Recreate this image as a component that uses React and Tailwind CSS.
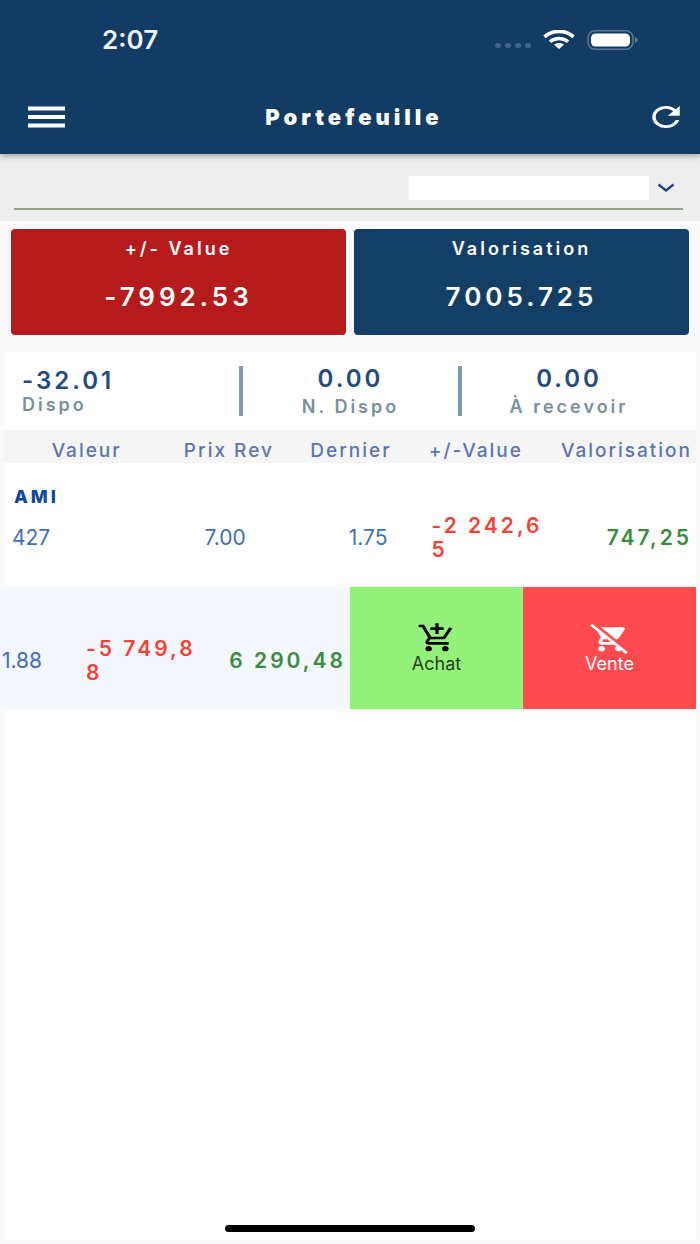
import { MdAddShoppingCart, MdRemoveShoppingCart } from "react-icons/md";
import { IoMdRefresh } from "react-icons/io";

function StatusBar() {
  return (
    <div className="flex h-20 items-center justify-between pl-[102px] pr-[61px]">
      <span className="text-[26px] leading-6 font-semibold text-white/95">2:07</span>
      <div className="flex items-center">
        <svg width="36" height="6" viewBox="0 0 36 6" className="mt-3 mr-3" aria-hidden="true">
          {[0, 10, 20, 30].map((x) => (
            <rect key={x} x={x} y="0" width="6" height="5" rx="2.5" fill="#41648a" />
          ))}
        </svg>
        <svg width="32" height="20" viewBox="0 0 32 20" className="mr-3" fill="none" stroke="#fff" aria-hidden="true">
          <path d="M1.5 6.8C9.5 -0.4 22.5 -0.4 30.5 6.8" strokeWidth="3.6" />
          <path d="M7 11.8C12 7.4 20 7.4 25 11.8" strokeWidth="3.4" />
          <path d="M16 19l-5-4.300c2.500-2.300 7.500-2.300 10 0z" fill="#fff" stroke="none" />
        </svg>
        <svg width="52" height="20" viewBox="0 0 52 20" aria-hidden="true">
          <rect x="1" y="0.75" width="45" height="18.5" rx="7" fill="none" stroke="#5b7996" strokeWidth="1.5" />
          <rect x="4" y="3.500" width="39" height="13" rx="4.500" fill="#fff" />
          <path d="M48 7c3.500 1 3.500 5 0 6z" fill="#5b7996" />
        </svg>
      </div>
    </div>
  );
}

function NavBar() {
  return (
    <div className="grid h-[74px] grid-cols-[1fr_auto_1fr] items-center pr-5 pl-7">
      <button type="button" aria-label="Menu" className="w-[38px]">
        <svg width="38" height="22" viewBox="0 0 38 22" fill="#fff">
          <rect y="0.500" width="37" height="4" />
          <rect y="9" width="37" height="4" />
          <rect y="17.500" width="37" height="4" />
        </svg>
      </button>
      <h1 className="text-[22px] leading-6 font-black tracking-[4px] text-white">Portefeuille</h1>
      <button type="button" aria-label="Actualiser" className="justify-self-end text-white">
        <IoMdRefresh preserveAspectRatio="none" className="-mr-1.5 h-8 w-10" />
      </button>
    </div>
  );
}

function AccountPicker() {
  return (
    <div className="bg-[#eeeeee] pt-[22px] pr-[17px] pb-[11px] pl-3.5">
      <div className="flex items-center justify-end border-b-2 border-[#94a48a] pr-1.5 pb-2">
        <select aria-label="Compte" className="h-6 w-[240px] appearance-none bg-white" />
        <svg width="18" height="10" viewBox="0 0 18 10" className="mr-0.5 ml-2" fill="none" stroke="#1d4580" strokeWidth="2.400" aria-hidden="true">
          <path d="M1.500 1.500L9 7.500L16.500 1.500" />
        </svg>
      </div>
    </div>
  );
}

function SummaryCard({ label, value, color }) {
  return (
    <div className={`flex h-[106px] flex-1 flex-col items-center gap-5 rounded-[4px] pt-2 text-white ${color}`}>
      <span className="text-[18px] leading-6 font-semibold tracking-[3px]">{label}</span>
      <span className="text-[26px] leading-8 font-semibold tracking-[4px]">{value}</span>
    </div>
  );
}

function Stat({ label, value, align }) {
  return (
    <div className={`flex flex-col font-semibold ${align}`}>
      <span className="text-[24px] leading-6 tracking-[3px] text-[#254a80]">{value}</span>
      <span className="text-[18px] leading-6 tracking-[3px] text-[#78909c]">{label}</span>
    </div>
  );
}

const amount = "text-[21px] leading-6 font-semibold tracking-[3px]";
const plain = "text-[21px] leading-6 text-[#3f6fba]";

export default function App() {
  return (
    <div className="flex min-h-screen flex-col bg-[#fafafa] font-['Inter',sans-serif]">
      <header className="relative bg-[#123c64] shadow-[0_2px_6px_rgba(0,0,0,0.35)]">
        <StatusBar />
        <NavBar />
      </header>
      <AccountPicker />

      <section className="flex gap-2 px-[11px] pt-2 pb-[17px]">
        <SummaryCard label="+/- Value" value="-7992.53" color="bg-[#b51b1b]" />
        <SummaryCard label="Valorisation" value="7005.725" color="bg-[#133f66]" />
      </section>

      <main className="mx-1 mb-1 flex flex-1 flex-col bg-white">
        <section className="grid h-[78px] grid-cols-[34%_4px_31%_4px_31%] items-center">
          <Stat value="-32.01" label="Dispo" align="items-start pt-1 pl-[18px]" />
          <div className="h-[50px] bg-[#8199b5]" />
          <Stat value="0.00" label="N. Dispo" align="items-center gap-1 pt-1" />
          <div className="h-[50px] bg-[#8199b5]" />
          <Stat value="0.00" label="À recevoir" align="items-center gap-1 pt-1" />
        </section>

        <table className="w-full table-fixed">
          <colgroup>
            <col className="w-[17%]" />
            <col className="w-[22%]" />
            <col className="w-[17%]" />
            <col className="w-[19%]" />
            <col className="w-[25%]" />
          </colgroup>
          <thead>
            <tr className="h-[33px] bg-[#f5f5f5] text-right text-[19px] leading-6 whitespace-nowrap text-[#5b76ae]">
              <th className="pt-2 font-medium tracking-[2px]">Valeur</th>
              <th className="pt-2 font-medium tracking-[2px]">Prix Rev</th>
              <th className="pt-2 font-medium tracking-[2px]">Dernier</th>
              <th className="pt-2 font-medium tracking-[2px]">+/-Value</th>
              <th className="pt-2 pr-1 font-medium tracking-[2px]">Valorisation</th>
            </tr>
          </thead>
          <tbody>
            <tr>
              <th colSpan={5} scope="rowgroup" className="pt-[22px] pb-[5px] pl-2.5 text-left text-[18px] leading-6 font-extrabold tracking-[3px] text-[#0d47a1]">
                AMI
              </th>
            </tr>
            <tr className="h-[73px] align-top">
              <td className={`pt-3 pl-2 ${plain}`}>427</td>
              <td className={`pt-3 pr-7 text-right ${plain}`}>7.00</td>
              <td className={`pt-3 pr-1 text-right ${plain}`}>1.75</td>
              <td className={`pl-10 text-[#f44336] ${amount}`}>
                <div className="w-[118px] break-all">{"-2\u00a0242,65"}</div>
              </td>
              <td className={`pt-3 pr-1 text-right text-[#388e3c] ${amount}`}>747,25</td>
            </tr>
            <tr>
              <td colSpan={5}>
                <div className="flex h-[122px]">
                  <div className="-ml-1 flex flex-1 items-center justify-end overflow-hidden bg-[#f4f7fd] pt-[26px] pr-1">
                    <span className={`mr-11 shrink-0 ${plain}`}>1.88</span>
                    <span className={`mr-1.5 w-[118px] shrink-0 break-all text-[#f44336] ${amount}`}>{"-5\u00a0749,88"}</span>
                    <span className={`w-[136px] shrink-0 text-right text-[#388e3c] ${amount}`}>{"6\u00a0290,48"}</span>
                  </div>
                  <button type="button" className="flex w-1/4 flex-col items-center justify-center bg-[#94f27a] text-black">
                    <MdAddShoppingCart preserveAspectRatio="none" className="h-8 w-10" />
                    <span className="text-[18px] leading-5 text-[#26421f]">Achat</span>
                  </button>
                  <button type="button" className="flex w-1/4 flex-col items-center justify-center bg-[#ff4b4f] text-white">
                    <MdRemoveShoppingCart preserveAspectRatio="none" className="h-8 w-10" />
                    <span className="text-[18px] leading-5">Vente</span>
                  </button>
                </div>
              </td>
            </tr>
          </tbody>
        </table>

        <div className="mx-auto mt-auto mb-2 h-[7px] w-[250px] rounded-full bg-black" />
      </main>
    </div>
  );
}
